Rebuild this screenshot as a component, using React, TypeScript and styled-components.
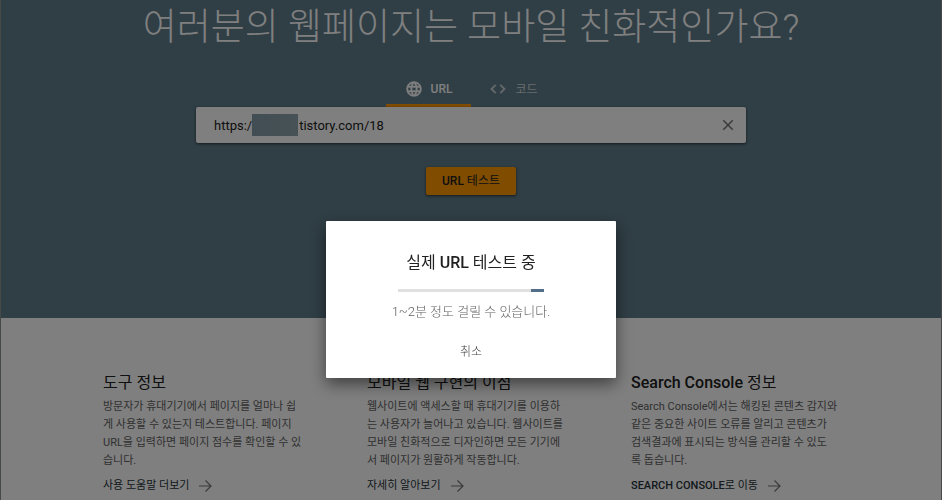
import React from "react";
import styled, { createGlobalStyle } from "styled-components";

const GlobalStyle = createGlobalStyle`
  *, *::before, *::after { box-sizing: border-box; }
  body {
    margin: 0;
    background: #ffffff;
    font-family: Roboto, "Noto Sans CJK KR", sans-serif;
    font-size: 12px;
    color: #212121;
  }
  button, input { font: inherit; }
  h1, h2, p { margin: 0; }
`;

const Page = styled.div`
  height: 100vh;
  display: flex;
  flex-direction: column;
  overflow: hidden;
  border: solid #8a9290;
  border-width: 0 1px;
`;

const Hero = styled.header`
  flex: none;
  display: flex;
  flex-direction: column;
  align-items: center;
  padding: 2px 0 123px;
  background: #607d8b;
  color: #ffffff;
`;

const Headline = styled.h1`
  font-size: 37px;
  line-height: 52px;
  font-weight: 300;
  white-space: nowrap;
`;

const Tabs = styled.div`
  display: flex;
  margin-top: 19px;
`;

const Tab = styled.button<{ $active?: boolean }>`
  display: flex;
  align-items: center;
  justify-content: center;
  gap: 8px;
  width: 85px;
  height: 34px;
  padding: 0;
  border: 0;
  border-bottom: 3px solid ${(p) => (p.$active ? "#ff9800" : "transparent")};
  background: none;
  color: #ffffff;
  font-size: 12px;
  font-weight: ${(p) => (p.$active ? 500 : 400)};
  opacity: ${(p) => (p.$active ? 1 : 0.7)};
`;

const SearchBox = styled.div`
  display: flex;
  align-items: center;
  width: 550px;
  max-width: 100%;
  height: 36px;
  padding: 0 9px 0 18px;
  border-radius: 2px;
  background: #ffffff;
  box-shadow: 0 1px 3px rgba(0, 0, 0, 0.6);
  color: #212121;
  font-size: 13px;
`;

const Redacted = styled.span`
  width: 46px;
  height: 22px;
  margin-right: 1px;
  background: linear-gradient(90deg, #839ca6, #8fa5ae);
`;

const UrlInput = styled.input`
  flex: 1;
  min-width: 0;
  padding: 0;
  border: 0;
  outline: 0;
  background: none;
  color: inherit;
`;

const ClearButton = styled.button`
  display: flex;
  padding: 0;
  border: 0;
  background: none;
  color: #757575;
`;

const TestButton = styled.button`
  height: 28px;
  margin-top: 24px;
  padding: 0 16px 4px;
  border: 0;
  border-radius: 2px;
  background: #ff9800;
  box-shadow: 0 1px 3px rgba(0, 0, 0, 0.6);
  color: #212121;
  font-size: 12px;
`;

const InfoGrid = styled.main`
  display: grid;
  grid-template-columns: repeat(3, minmax(0, 208px));
  justify-content: center;
  column-gap: 56px;
  padding-top: 53px;
`;

const InfoTitle = styled.h2`
  font-size: 16px;
  line-height: 24px;
  font-weight: 400;
  white-space: nowrap;
`;

const InfoText = styled.p`
  margin-top: 3px;
  color: #616161;
  font-size: 11px;
  line-height: 18px;
  white-space: nowrap;
`;

const InfoLink = styled.a`
  display: flex;
  align-items: center;
  gap: 8px;
  margin-top: 6px;
  color: #263238;
  font-size: 11px;
  line-height: 20px;
  text-decoration: none;
  white-space: nowrap;
`;

const Latin = styled.span`
  font-weight: 500;
`;

const Backdrop = styled.div`
  position: fixed;
  inset: 0;
  display: flex;
  justify-content: center;
  align-items: flex-start;
  padding-top: 221px;
  background: rgba(0, 0, 0, 0.5);
`;

const Dialog = styled.section`
  display: flex;
  flex-direction: column;
  align-items: center;
  width: 290px;
  padding: 29px 24px 16px;
  border-radius: 1px;
  background: #ffffff;
  box-shadow: 0 6px 16px rgba(0, 0, 0, 0.5);
`;

const DialogTitle = styled.h2`
  font-size: 16px;
  line-height: 26px;
  font-weight: 400;
`;

const ProgressTrack = styled.div`
  display: flex;
  justify-content: flex-end;
  width: 146px;
  height: 3px;
  margin-top: 13px;
  background: #e0e0e0;
`;

const ProgressBar = styled.div`
  width: 13px;
  background: #546e8a;
`;

const DialogText = styled.p`
  margin-top: 10px;
  color: #616161;
  font-size: 13px;
  line-height: 20px;
  font-weight: 300;
`;

const CancelButton = styled.button`
  margin-top: 20px;
  padding: 0 8px;
  border: 0;
  background: none;
  color: #424242;
  font-size: 12px;
  line-height: 20px;
  font-weight: 300;
`;

const GlobeIcon = () => (
  <svg width="18" height="18" viewBox="0 0 24 24" fill="currentColor" stroke="currentColor" strokeWidth="0.5" aria-hidden="true">
    <path d="M11.99 2C6.47 2 2 6.48 2 12s4.47 10 9.99 10C17.52 22 22 17.52 22 12S17.52 2 11.99 2zm6.93 6h-2.95a15.65 15.65 0 0 0-1.38-3.56A8.03 8.03 0 0 1 18.92 8zM12 4.04c.83 1.2 1.48 2.53 1.91 3.96h-3.82c.43-1.43 1.08-2.76 1.91-3.96zM4.26 14C4.1 13.36 4 12.69 4 12s.1-1.36.26-2h3.38c-.08.66-.14 1.32-.14 2s.06 1.34.14 2H4.26zm.82 2h2.95c.32 1.25.78 2.45 1.38 3.56A7.99 7.99 0 0 1 5.08 16zm2.95-8H5.08a7.99 7.99 0 0 1 4.33-3.56A15.65 15.65 0 0 0 8.03 8zM12 19.96c-.83-1.2-1.48-2.53-1.91-3.96h3.82c-.43 1.43-1.08 2.76-1.91 3.96zM14.34 14H9.66c-.09-.66-.16-1.32-.16-2s.07-1.35.16-2h4.68c.09.65.16 1.32.16 2s-.07 1.34-.16 2zm.25 5.56c.6-1.11 1.06-2.31 1.38-3.56h2.95a8.03 8.03 0 0 1-4.33 3.56zM16.36 14c.08-.66.14-1.32.14-2s-.06-1.34-.14-2h3.38c.16.64.26 1.31.26 2s-.1 1.36-.26 2h-3.38z" />
  </svg>
);

const CodeIcon = () => (
  <svg width="18" height="18" viewBox="0 0 24 24" fill="currentColor" stroke="currentColor" strokeWidth="0.5" aria-hidden="true">
    <path d="M9.4 16.6 4.8 12l4.6-4.6L8 6l-6 6 6 6 1.4-1.4zm5.2 0 4.6-4.6-4.6-4.6L16 6l6 6-6 6-1.4-1.4z" />
  </svg>
);

const CloseIcon = () => (
  <svg width="18" height="18" viewBox="0 0 24 24" fill="currentColor" aria-hidden="true">
    <path d="M19 6.41 17.59 5 12 10.59 6.41 5 5 6.41 10.59 12 5 17.59 6.41 19 12 13.41 17.59 19 19 17.59 13.41 12z" />
  </svg>
);

const ArrowIcon = () => (
  <svg width="16" height="16" viewBox="0 0 16 16" fill="none" stroke="#757575" strokeWidth="1.2" aria-hidden="true">
    <path d="M2 8h12M8.500 2.500 14 8l-5.500 5.500" />
  </svg>
);

const infos = [
  {
    latin: "",
    title: "도구 정보",
    lines: [
      "방문자가 휴대기기에서 페이지를 얼마나 쉽",
      "게 사용할 수 있는지 테스트합니다. 페이지",
      "URL을 입력하면 페이지 점수를 확인할 수 있",
      "습니다.",
    ],
    linkLatin: "",
    link: "사용 도움말 더보기",
  },
  {
    latin: "",
    title: "모바일 웹 구현의 이점",
    lines: [
      "웹사이트에 액세스할 때 휴대기기를 이용하",
      "는 사용자가 늘어나고 있습니다. 웹사이트를",
      "모바일 친화적으로 디자인하면 모든 기기에",
      "서 페이지가 원활하게 작동합니다.",
    ],
    linkLatin: "",
    link: "자세히 알아보기",
  },
  {
    latin: "Search Console",
    title: " 정보",
    lines: [
      "Search Console에서는 해킹된 콘텐츠 감지와",
      "같은 중요한 사이트 오류를 알리고 콘텐츠가",
      "검색결과에 표시되는 방식을 관리할 수 있도",
      "록 돕습니다.",
    ],
    linkLatin: "SEARCH CONSOLE",
    link: "로 이동",
  },
];

export default function App() {
  return (
    <>
      <GlobalStyle />
      <Page>
        <Hero>
          <Headline>여러분의 웹페이지는 모바일 친화적인가요?</Headline>
          <Tabs role="tablist">
            <Tab role="tab" aria-selected="true" $active>
              <GlobeIcon />
              URL
            </Tab>
            <Tab role="tab" aria-selected="false">
              <CodeIcon />
              코드
            </Tab>
          </Tabs>
          <SearchBox>
            <span>https:/</span>
            <Redacted />
            <UrlInput aria-label="URL" defaultValue="tistory.com/18" />
            <ClearButton aria-label="지우기">
              <CloseIcon />
            </ClearButton>
          </SearchBox>
          <TestButton>
            <Latin>URL</Latin> 테스트
          </TestButton>
        </Hero>
        <InfoGrid>
          {infos.map((info) => (
            <article key={info.title}>
              <InfoTitle>
                {info.latin && <Latin>{info.latin}</Latin>}
                {info.title}
              </InfoTitle>
              <InfoText>
                {info.lines.map((line) => (
                  <React.Fragment key={line}>
                    {line}
                    <br />
                  </React.Fragment>
                ))}
              </InfoText>
              <InfoLink href="#">
                <span>
                  {info.linkLatin && <Latin>{info.linkLatin}</Latin>}
                  {info.link}
                </span>
                <ArrowIcon />
              </InfoLink>
            </article>
          ))}
        </InfoGrid>
      </Page>
      <Backdrop>
        <Dialog role="dialog" aria-modal="true" aria-labelledby="dialog-title">
          <DialogTitle id="dialog-title">
            실제 <Latin>URL</Latin> 테스트 중
          </DialogTitle>
          <ProgressTrack role="progressbar" aria-labelledby="dialog-title">
            <ProgressBar />
          </ProgressTrack>
          <DialogText>1~2분 정도 걸릴 수 있습니다.</DialogText>
          <CancelButton>취소</CancelButton>
        </Dialog>
      </Backdrop>
    </>
  );
}
